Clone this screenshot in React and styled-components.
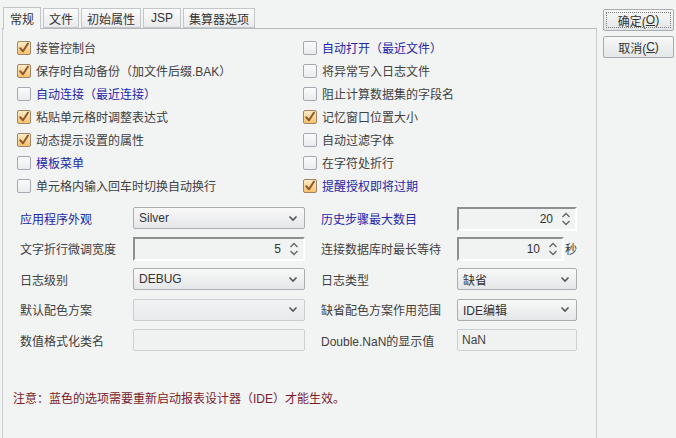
import React from "react";
import styled, { createGlobalStyle } from "styled-components";

const Global = createGlobalStyle`
  html, body { margin: 0; padding: 0; background: #f2f3f3; }
  body { width: 676px; height: 438px; overflow: hidden;
    font-family: "Liberation Sans", "Noto Sans CJK SC", sans-serif; font-size: 12px; color: #3a3a3a; }
`;

const Window = styled.div`
  display: flex;
  width: 676px;
  height: 438px;
  background: #f2f3f3;
  box-sizing: border-box;
`;

const Main = styled.div`
  display: flex;
  flex-direction: column;
  width: 595px;
  margin-left: 2px;
  padding-top: 7px;
`;

const TabBar = styled.div`
  display: flex;
  gap: 2px;
  padding-left: 1px;
  height: 21px;
  align-items: flex-end;
`;

const Tab = styled.div`
  box-sizing: border-box;
  height: ${p => (p.$active ? "22px" : "20px")};
  margin-bottom: ${p => (p.$active ? "-1px" : "0")};
  padding: 0 ${p => p.$pad || 5}px;
  display: flex;
  align-items: center;
  border: 1px solid #c3c6c9;
  border-bottom: ${p => (p.$active ? "none" : "1px solid #c3c6c9")};
  background: ${p => (p.$active ? "#f4f5f5" : "linear-gradient(#fbfbfb, #e9eaeb)")};
  color: #333;
  font-size: 12px;
  position: relative;
  z-index: ${p => (p.$active ? 2 : 1)};
`;

const Panel = styled.div`
  flex: 1;
  box-sizing: border-box;
  border: 1px solid #c9ccce;
  border-bottom: none;
  border-top: 1px solid #b7babd;
  background: #f2f3f3;
  padding: 7px 0 0 14px;
  display: flex;
  flex-direction: column;
`;

const CheckGrid = styled.div`
  display: grid;
  grid-template-columns: 286px 1fr;
  grid-auto-rows: 23px;
  align-items: center;
`;

const CheckRow = styled.label`
  display: flex;
  align-items: center;
  gap: 5px;
  color: ${p => (p.$blue ? "#2326a8" : "#404040")};
  font-size: 12px;
  white-space: nowrap;
`;

const Box = styled.span`
  box-sizing: border-box;
  width: 14px;
  height: 14px;
  border-radius: 2px;
  border: 1px solid ${p => (p.$on ? "#a08465" : "#a2a9b0")};
  background: ${p => (p.$on ? "linear-gradient(#feedc8, #f8c06a)" : "linear-gradient(#fbfbfb, #e9ebed)")};
  display: flex;
  align-items: center;
  justify-content: center;
  flex: none;
`;

const FormGrid = styled.div`
  display: grid;
  grid-template-columns: 113px 172px 16px 136px 120px;
  grid-auto-rows: 22px;
  row-gap: 8.5px;
  align-items: center;
  margin-top: 10px;
  margin-left: 3px;
`;

const Label = styled.div`
  color: ${p => (p.$blue ? "#2326a8" : "#404040")};
  font-size: 12px;
  white-space: nowrap;
  grid-column: ${p => p.$col};
`;

const Select = styled.div`
  grid-column: ${p => p.$col};
  box-sizing: border-box;
  height: 22px;
  border: 1px solid ${p => (p.$disabled ? "#c9cdd0" : "#a9aeb3")};
  border-radius: 2px;
  background: ${p => (p.$disabled ? "linear-gradient(#f1f2f3, #e9eaeb)" : "linear-gradient(#f9f9f9, #e4e6e8)")};
  display: flex;
  align-items: center;
  justify-content: space-between;
  padding: 0 6px 0 5px;
  color: #333;
  font-size: 12px;
`;

const Spin = styled.div`
  grid-column: ${p => p.$col};
  display: flex;
  align-items: center;
  gap: 1px;
`;

const SpinBox = styled.div`
  box-sizing: border-box;
  width: ${p => p.$w}px;
  height: 24px;
  margin-top: 1px;
  border-top: 2px solid #8d8f91;
  border-left: 2px solid #8d8f91;
  border-bottom: 2px solid #ffffff;
  border-right: 2px solid #ffffff;
  background: #f1f2f2;
  display: flex;
  align-items: center;
  justify-content: flex-end;
  padding-right: 4px;
  gap: 8px;
  color: #333;
  font-size: 12px;
`;

const TextBox = styled.div`
  grid-column: ${p => p.$col};
  box-sizing: border-box;
  height: 22px;
  border: 1px solid #cdd0d3;
  border-radius: 2px;
  background: #f0f1f1;
  display: flex;
  align-items: center;
  padding-left: 4px;
  color: #444;
  font-size: 12px;
`;

const Note = styled.div`
  margin-top: 38px;
  margin-left: -4px;
  color: #7a1c2c;
  font-size: 12px;
`;

const Side = styled.div`
  display: flex;
  flex-direction: column;
  gap: 5px;
  margin-left: 6px;
  padding-top: 9px;
`;

const Button = styled.div`
  box-sizing: border-box;
  width: 71px;
  height: 22px;
  border: 1px solid #a7abaf;
  border-radius: 2px;
  background: linear-gradient(#f8f8f8, #e3e5e7);
  display: flex;
  align-items: center;
  justify-content: center;
  color: #333;
  font-size: 12px;
  position: relative;
  &::after {
    content: "";
    display: ${p => (p.$focus ? "block" : "none")};
    position: absolute;
    inset: 2px;
    border: 1px dotted #7a7a7a;
  }
`;

const Mnemonic = styled.span`
  text-decoration: underline;
`;

const Check = ({ on }) => (
  <Box $on={on}>
    {on && (
      <svg width="12" height="12" viewBox="0 0 12 12">
        <path d="M2.2 6.3 L5 9.3 L10 1.5" fill="none" stroke="#8b5a33" strokeWidth="2" strokeLinecap="round" strokeLinejoin="round" />
      </svg>
    )}
  </Box>
);

const Chevron = () => (
  <svg width="10" height="7" viewBox="0 0 10 7">
    <path d="M1.5 1.5 L5 5 L8.5 1.5" fill="none" stroke="#555" strokeWidth="1.6" />
  </svg>
);

const Arrows = () => (
  <svg width="10" height="16" viewBox="0 0 10 16">
    <path d="M1.5 6 L5 2.5 L8.5 6" fill="none" stroke="#666" strokeWidth="1.4" />
    <path d="M1.5 10 L5 13.5 L8.5 10" fill="none" stroke="#666" strokeWidth="1.4" />
  </svg>
);

const checks = [
  [{ t: "接管控制台", on: true }, { t: "自动打开（最近文件）", blue: true }],
  [{ t: "保存时自动备份（加文件后缀.BAK）", on: true }, { t: "将异常写入日志文件" }],
  [{ t: "自动连接（最近连接）", blue: true }, { t: "阻止计算数据集的字段名" }],
  [{ t: "粘贴单元格时调整表达式", on: true }, { t: "记忆窗口位置大小", on: true }],
  [{ t: "动态提示设置的属性", on: true }, { t: "自动过滤字体" }],
  [{ t: "模板菜单", blue: true }, { t: "在字符处折行" }],
  [{ t: "单元格内输入回车时切换自动换行" }, { t: "提醒授权即将过期", on: true, blue: true }],
];

export default function App() {
  return (
    <>
      <Global />
      <Window>
        <Main>
          <TabBar>
            <Tab $active $pad={6}>常规</Tab>
            <Tab>文件</Tab>
            <Tab>初始属性</Tab>
            <Tab $pad={7}>JSP</Tab>
            <Tab>集算器选项</Tab>
          </TabBar>
          <Panel>
            <CheckGrid>
              {checks.flat().map((c, i) => (
                <CheckRow key={i} $blue={c.blue}>
                  <Check on={c.on} />
                  {c.t}
                </CheckRow>
              ))}
            </CheckGrid>
            <FormGrid>
              <Label $col={1} $blue>应用程序外观</Label>
              <Select $col={2}>Silver<Chevron /></Select>
              <Label $col={4} $blue>历史步骤最大数目</Label>
              <Spin $col={5}><SpinBox $w={120}>20<Arrows /></SpinBox></Spin>

              <Label $col={1}>文字折行微调宽度</Label>
              <Spin $col={2}><SpinBox $w={172}>5<Arrows /></SpinBox></Spin>
              <Label $col={4}>连接数据库时最长等待</Label>
              <Spin $col={5}><SpinBox $w={108}>10<Arrows /></SpinBox>秒</Spin>

              <Label $col={1}>日志级别</Label>
              <Select $col={2}>DEBUG<Chevron /></Select>
              <Label $col={4}>日志类型</Label>
              <Select $col={5}>缺省<Chevron /></Select>

              <Label $col={1}>默认配色方案</Label>
              <Select $col={2} $disabled><span /><Chevron /></Select>
              <Label $col={4}>缺省配色方案作用范围</Label>
              <Select $col={5}>IDE编辑<Chevron /></Select>

              <Label $col={1}>数值格式化类名</Label>
              <TextBox $col={2} />
              <Label $col={4}>Double.NaN的显示值</Label>
              <TextBox $col={5}>NaN</TextBox>
            </FormGrid>
            <Note>注意：蓝色的选项需要重新启动报表设计器（IDE）才能生效。</Note>
          </Panel>
        </Main>
        <Side>
          <Button $focus>确定(<Mnemonic>O</Mnemonic>)</Button>
          <Button>取消(<Mnemonic>C</Mnemonic>)</Button>
        </Side>
      </Window>
    </>
  );
}
